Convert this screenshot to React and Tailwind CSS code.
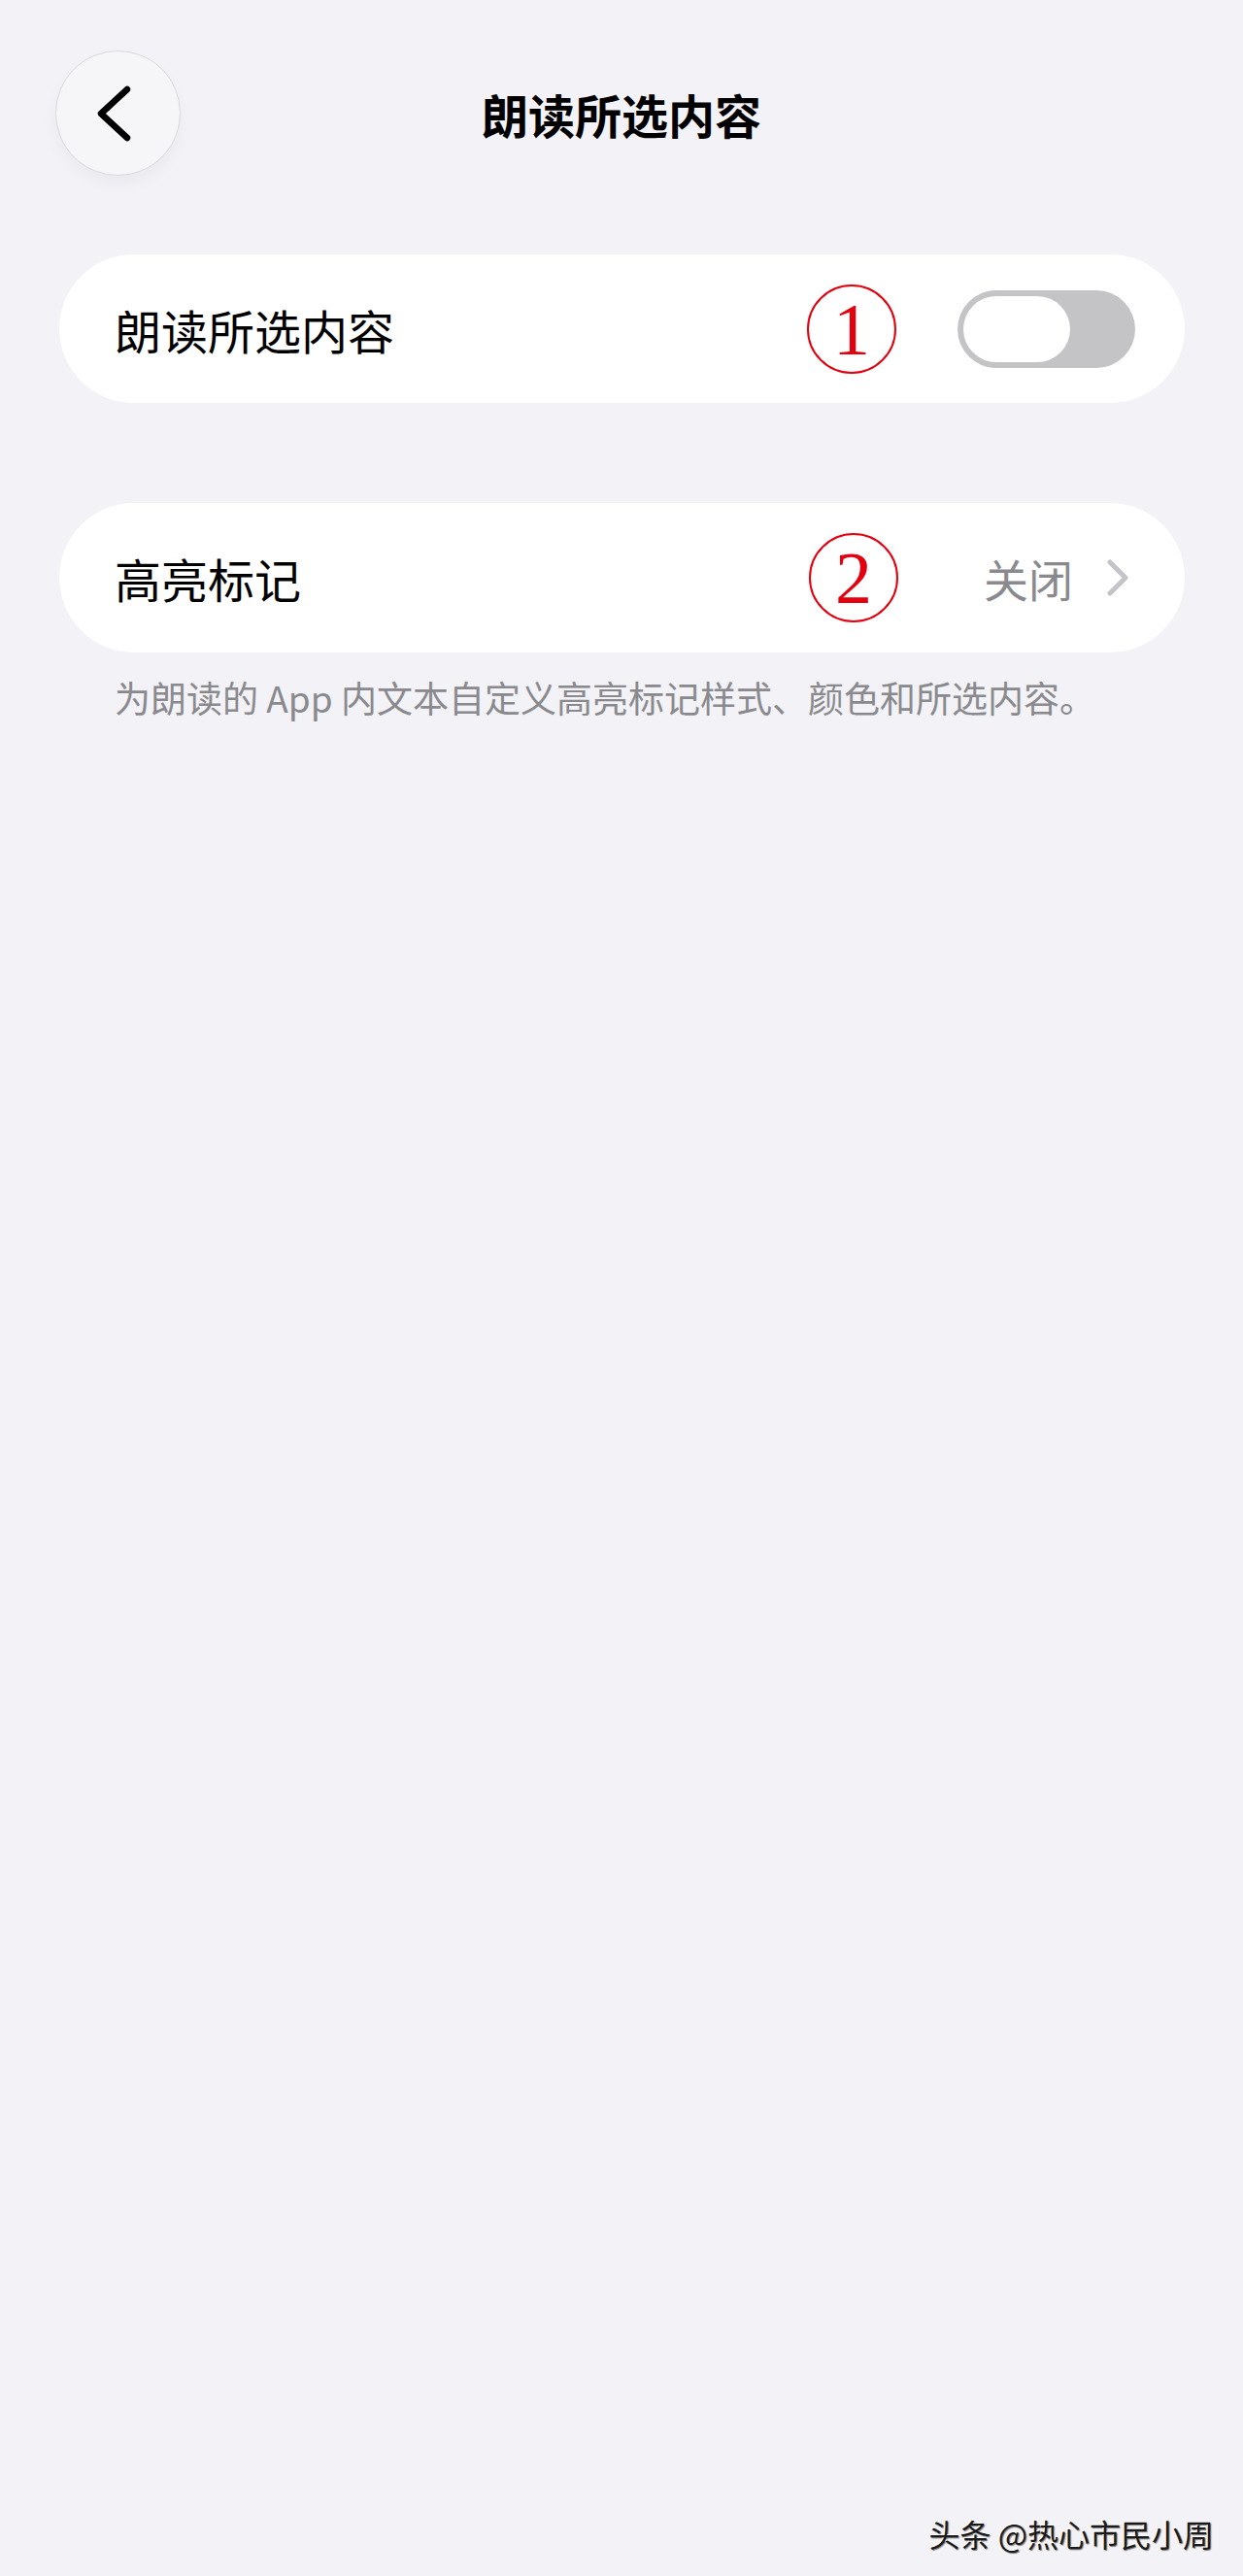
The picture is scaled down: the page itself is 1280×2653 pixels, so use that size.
import React from 'react';

const font = "font-['Noto_Sans_CJK_SC','Noto_Sans',sans-serif]";

const Marker = ({ n }) => (
  <div className="w-[92px] h-[92px] flex-shrink-0 rounded-full border-[2.5px] border-[#e3000f] flex items-center justify-center">
    <span className="font-['Liberation_Serif',serif] text-[76px] leading-none text-[#e3000f]">{n}</span>
  </div>
);

const Toggle = () => (
  <div className="w-[183px] h-[80px] rounded-full bg-[#c4c4c6] p-[6px] flex items-center">
    <div className="w-[110px] h-[68px] rounded-full bg-white" />
  </div>
);

export default function App() {
  return (
    <div className={`min-h-[2653px] bg-[#f2f2f7] flex flex-col ${font}`}>
      {/* header */}
      <div className="grid grid-cols-[1fr_auto_1fr] items-center pt-[52px] px-[57px]">
        <button className="w-[129px] h-[129px] rounded-full bg-[#f6f6f9] border-[1.5px] border-[#dadade] shadow-[0_8px_16px_rgba(0,0,0,0.04)] relative">
          <svg width="129" height="129" viewBox="0 0 129 129" className="absolute -left-[1.5px] -top-[1.5px]">
            <path d="M74 40 L47 65 L74 90" fill="none" stroke="#000" strokeWidth="6.5" strokeLinecap="round" strokeLinejoin="round" />
          </svg>
        </button>
        <h1 className="text-[48px] font-semibold text-black leading-none">朗读所选内容</h1>
        <div />
      </div>

      {/* reading card */}
      <div className="mt-[81px] ml-[61px] mr-[60px] h-[153px] rounded-full bg-white flex items-center pl-[57px] pr-[51px]">
        <span className="flex-1 text-[48px] text-black leading-none">朗读所选内容</span>
        <Marker n="1" />
        <div className="ml-[63px]">
          <Toggle />
        </div>
      </div>

      {/* highlight card */}
      <div className="mt-[103px] ml-[61px] mr-[60px] h-[154px] rounded-full bg-white flex items-center pl-[57px] pr-[58px]">
        <span className="flex-1 text-[48px] text-black leading-none">高亮标记</span>
        <Marker n="2" />
        <span className="ml-[88px] text-[46px] text-[#8a8a8e] leading-none">关闭</span>
        <svg width="22" height="38" viewBox="0 0 22 38" className="ml-[35px]">
          <path d="M3 3 L19 19 L3 35" fill="none" stroke="#c4c4c8" strokeWidth="5" strokeLinecap="round" strokeLinejoin="round" />
        </svg>
      </div>

      <p className="mt-[22px] pl-[118px] text-[37px] leading-[1.3] text-[#8a8a8e]">
        为朗读的 App 内文本自定义高亮标记样式、颜色和所选内容。
      </p>

      {/* watermark */}
      <div className="mt-auto flex justify-end pr-[30px] pb-[28px]">
        <span className="text-[32px] leading-none text-[#1a1a1a] [text-shadow:-1px_-1px_0_#fff,1px_1px_1px_rgba(0,0,0,0.5)]">头条 @热心市民小周</span>
      </div>
    </div>
  );
}
